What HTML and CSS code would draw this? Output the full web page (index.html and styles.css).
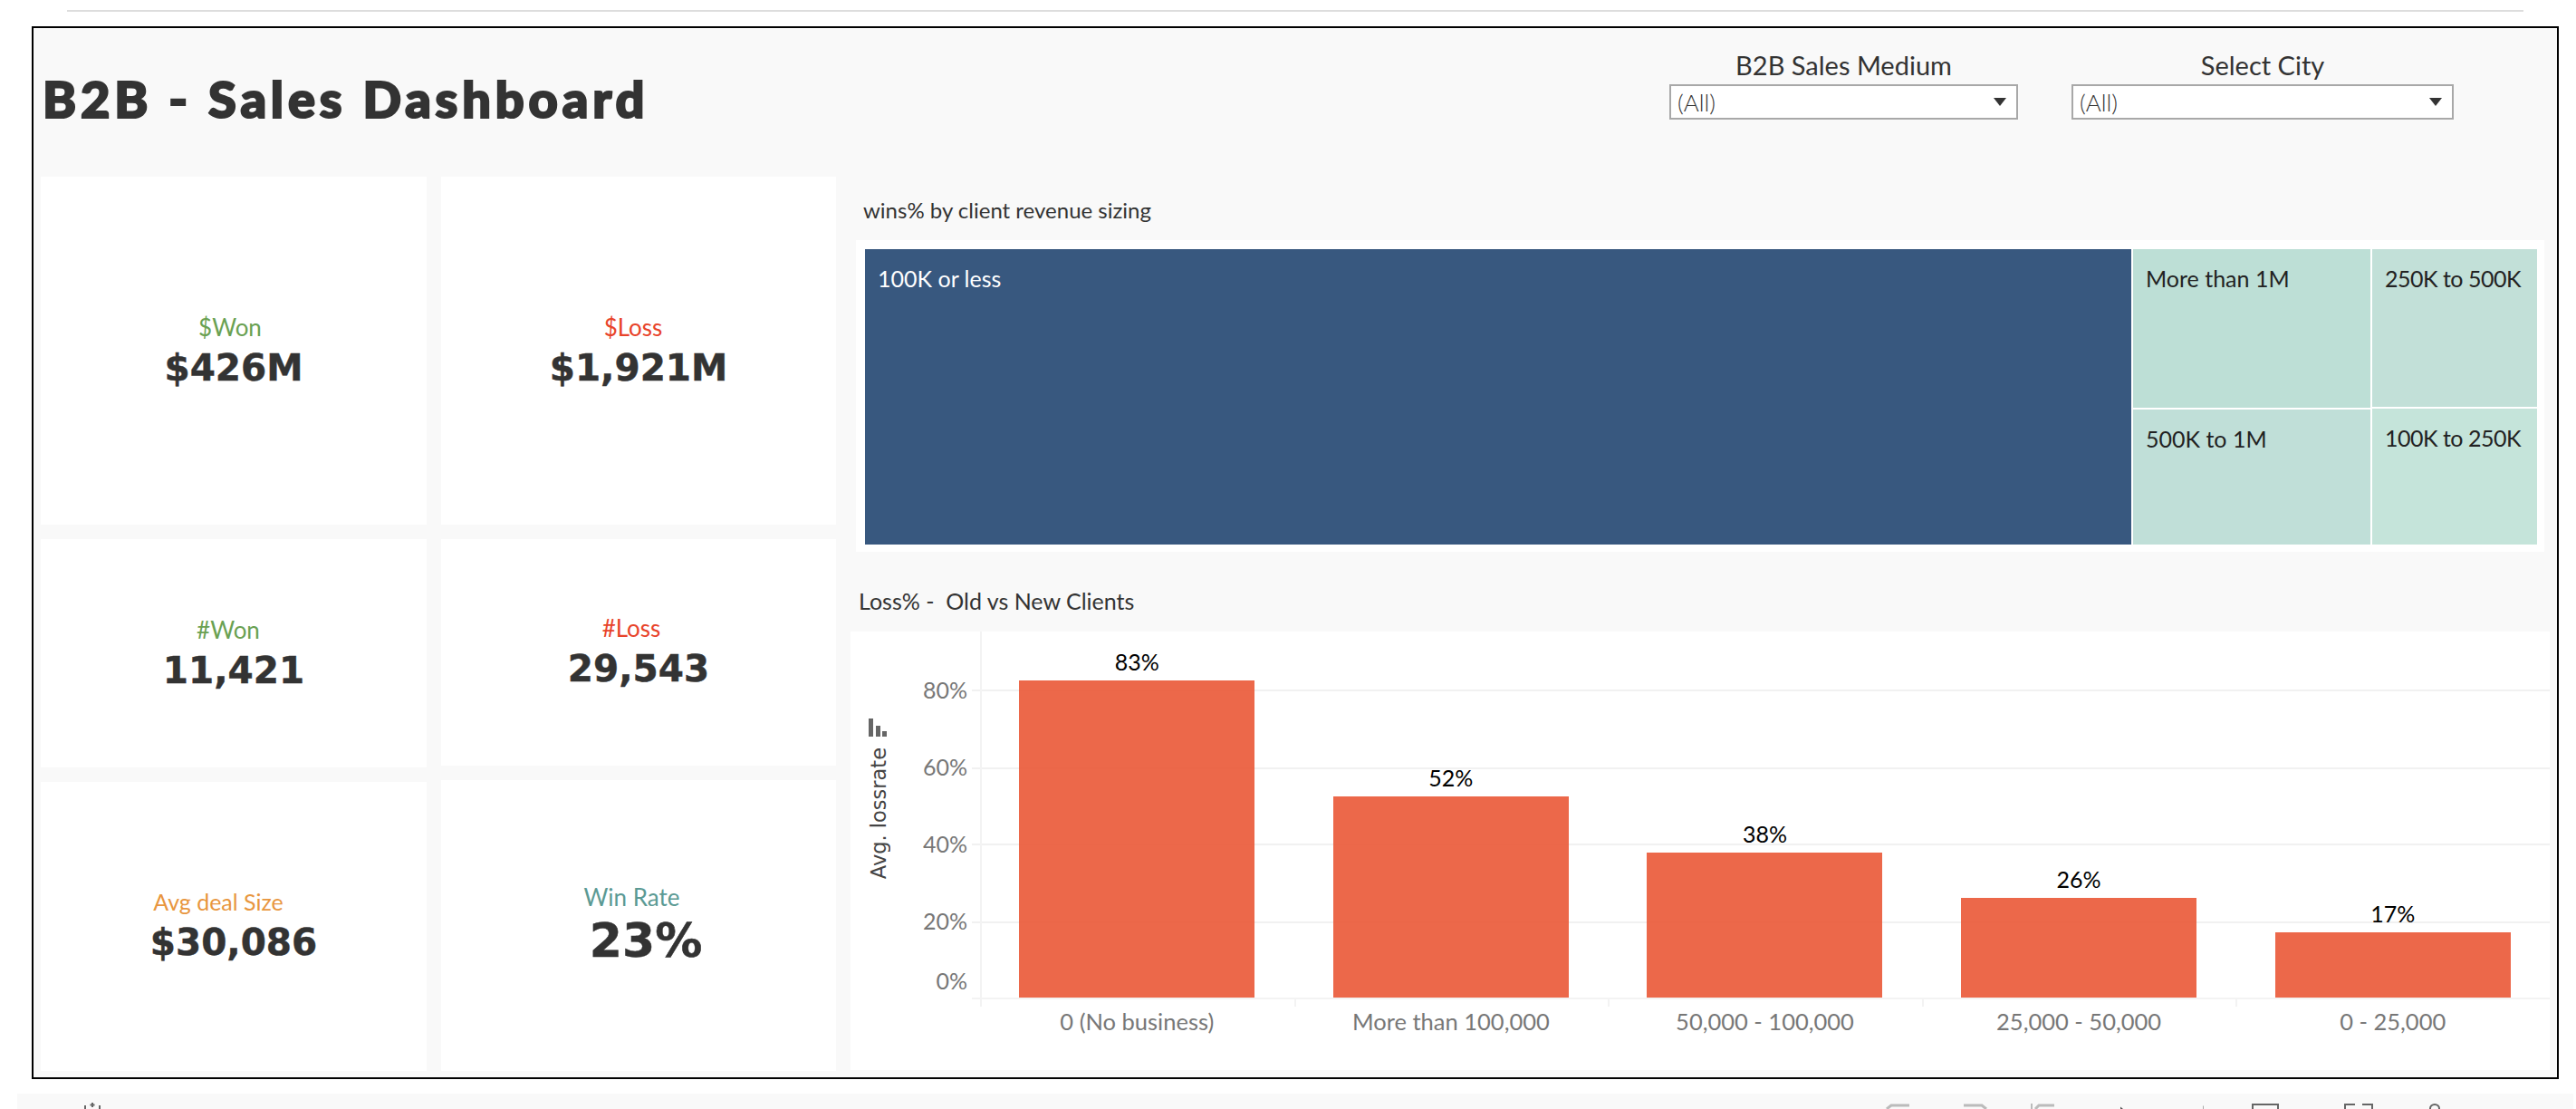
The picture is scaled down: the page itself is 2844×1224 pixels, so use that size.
FILE: index.html
```html
<!DOCTYPE html>
<html lang="en">
<head>
<meta charset="utf-8">
<title>B2B - Sales Dashboard</title>
<link rel="stylesheet" href="styles.css">
</head>
<body>
<div class="topline"></div>
<main class="frame">
  <header class="head">
    <h1 class="title">B2B - Sales Dashboard</h1>
    <div class="filters">
      <div class="filter filter-a">
        <div class="filter-label">B2B Sales Medium</div>
        <div class="select"><span>(All)</span><i class="caret"></i></div>
      </div>
      <div class="filter filter-b">
        <div class="filter-label">Select City</div>
        <div class="select"><span>(All)</span><i class="caret"></i></div>
      </div>
    </div>
  </header>
  <div class="body">
    <section class="kpis">
      <div class="kpi-col">
        <div class="kpi r1"><div class="kpi-label won s-won">$Won</div><div class="kpi-value">$426M</div></div>
        <div class="kpi r2a"><div class="kpi-label won n-won">#Won</div><div class="kpi-value">11,421</div></div>
        <div class="kpi r3a"><div class="kpi-label avg">Avg deal Size</div><div class="kpi-value">$30,086</div></div>
      </div>
      <div class="kpi-col">
        <div class="kpi r1"><div class="kpi-label loss s-loss">$Loss</div><div class="kpi-value">$1,921M</div></div>
        <div class="kpi r2b"><div class="kpi-label loss n-loss">#Loss</div><div class="kpi-value">29,543</div></div>
        <div class="kpi r3b"><div class="kpi-label rate">Win Rate</div><div class="kpi-value big">23%</div></div>
      </div>
    </section>
    <section class="charts">
      <h2 class="tree-title">wins% by client revenue sizing</h2>
      <div class="tree-panel">
        <div class="treemap">
          <div class="cell main">100K or less</div>
          <div class="tree-col col2">
            <div class="cell c1 h1a">More than 1M</div>
            <div class="cell c2 h1b">500K to 1M</div>
          </div>
          <div class="tree-col col3">
            <div class="cell c3 h2a">250K to 500K</div>
            <div class="cell c4 h2b">100K to 250K</div>
          </div>
        </div>
      </div>
      <h2 class="bar-title">Loss% -&nbsp; Old vs New Clients</h2>
      <div class="bar-panel">
        <div class="y-title">
          <svg class="sort" width="20" height="20" viewBox="0 0 20 20"><rect x="0" y="0" width="5" height="20"/><rect x="8" y="8" width="5" height="12"/><rect x="15" y="14" width="5" height="6"/></svg>
          <span class="y-text">Avg. lossrate</span>
        </div>
        <div class="y-axis">
          <span class="yt" style="top:50px">80%</span>
          <span class="yt" style="top:135px">60%</span>
          <span class="yt" style="top:220px">40%</span>
          <span class="yt" style="top:305px">20%</span>
          <span class="yt" style="top:371px">0%</span>
        </div>
        <div class="plot">
          <div class="grid-line" style="top:64px"></div>
          <div class="grid-line" style="top:150px"></div>
          <div class="grid-line" style="top:234px"></div>
          <div class="grid-line" style="top:320px"></div>
          <div class="bars">
            <div class="bar-col"><div class="bar-val">83%</div><div class="bar" style="height:350px"></div></div>
            <div class="bar-col"><div class="bar-val">52%</div><div class="bar" style="height:222px"></div></div>
            <div class="bar-col"><div class="bar-val">38%</div><div class="bar" style="height:160px"></div></div>
            <div class="bar-col"><div class="bar-val">26%</div><div class="bar" style="height:110px"></div></div>
            <div class="bar-col"><div class="bar-val">17%</div><div class="bar" style="height:72px"></div></div>
          </div>
          <div class="x-axis">
            <div class="x-cell">0 (No business)</div>
            <div class="x-cell">More than 100,000</div>
            <div class="x-cell">50,000 - 100,000</div>
            <div class="x-cell">25,000 - 50,000</div>
            <div class="x-cell">0 - 25,000</div>
          </div>
        </div>
      </div>
    </section>
  </div>
</main>
<footer class="toolbar">
  <svg class="tool-edit" width="18" height="8" viewBox="0 0 18 8"><path d="M9 1v5M6.500 3.500h5M1 4v4M17 4v4" stroke="#666" stroke-width="2" fill="none"/></svg>
  <svg class="tool undo" width="26" height="8" viewBox="0 0 26 8"><path d="M1 8l5-4h20" stroke="#bbb" stroke-width="3" fill="none"/></svg>
  <svg class="tool redo" width="26" height="8" viewBox="0 0 26 8"><path d="M25 8l-5-4H0" stroke="#bbb" stroke-width="3" fill="none"/></svg>
  <svg class="tool revert" width="26" height="8" viewBox="0 0 26 8"><path d="M1 2v6" stroke="#bbb" stroke-width="2" fill="none"/><path d="M5 8l4-4h17" stroke="#bbb" stroke-width="3" fill="none"/></svg>
  <svg class="tool refresh" width="92" height="8" viewBox="0 0 92 8"><path d="M0 5.500v2.500h3z" fill="#555"/><path d="M92 4.500v3.500" stroke="#aaa" stroke-width="2" fill="none"/></svg>
  <svg class="tool device" width="30" height="8" viewBox="0 0 30 8"><path d="M1 8V3h28v5" stroke="#666" stroke-width="2" fill="none"/></svg>
  <svg class="tool full" width="32" height="8" viewBox="0 0 32 8"><path d="M1 8V3h11M20 3h11v5" stroke="#666" stroke-width="2" fill="none"/></svg>
  <svg class="tool pin" width="14" height="8" viewBox="0 0 14 8"><path d="M2 8V7.500a5 4.500 0 0 1 10 0V8" stroke="#666" stroke-width="2" fill="none"/></svg>
</footer>
</body>
</html>
```
FILE: styles.css
```css
* { box-sizing: border-box; }
html, body { margin: 0; padding: 0; height: 1224px; overflow: hidden; background: #fff; }
body { font-family: "Lato", sans-serif; color: #333; position: relative; }

.topline { height: 2px; margin: 11px 58px 0 74px; background: #dddddd; }

.frame {
  width: 2790px; height: 1162px; margin: 16px 0 0 35px;
  border: 2px solid #000; background: #f9f9f9;
  display: flex; flex-direction: column; overflow: hidden;
}

.head { height: 164px; position: relative; display: flex; flex: none; }
.title {
  margin: 48px 0 0 10px; font-family: "Lato", sans-serif; font-weight: 900;
  font-size: 56px; line-height: 60px; color: #333; letter-spacing: 4.800px;
  -webkit-text-stroke: 2.200px #333;
}
.filters { display: flex; margin-left: auto; padding-top: 24px; margin-right: 114px; gap: 59px; }
.filter-a { width: 385px; }
.filter-b { width: 422px; }
.filter-label { font-size: 29px; line-height: 34px; text-align: center; color: #333; }
.select {
  height: 39px; margin-top: 4px; border: 2px solid #a8a8a8; background: #fff;
  display: flex; align-items: center; justify-content: space-between;
  padding: 0 11px 0 7px; font-size: 26px; font-weight: 300; color: #333;
}
.caret { width: 0; height: 0; border-left: 7px solid transparent; border-right: 7px solid transparent; border-top: 9px solid #333; }

.body { flex: 1; display: flex; min-height: 0; }
.kpis { width: 886px; flex: none; display: flex; padding-left: 8px; gap: 16px; }
.kpi-col { display: flex; flex-direction: column; gap: 16px; }
.kpi-col:first-child { width: 426px; }
.kpi-col:last-child { width: 436px; }
.kpi { background: #fff; display: flex; flex-direction: column; align-items: center; flex: none; }
.r1 { height: 384px; padding-top: 151px; }
.r2a { height: 252px; padding-top: 85px; }
.r2b { height: 250px; padding-top: 83px; }
.r3a { height: 319px; padding-top: 117px; }
.r3b { height: 321px; padding-top: 114px; }
.kpi-label { font-size: 26px; line-height: 30px; }
.kpi-value { font-family: "DejaVu Sans", sans-serif; font-weight: 700; font-size: 40.500px; line-height: 48px; color: #333; margin-top: 6px; -webkit-text-stroke: .5px #333; }
.kpi-value.big { font-size: 52px; line-height: 56px; margin: 5px 0 0 16px; }
.won { color: #6aa152; }
.loss { color: #e8432a; }
.s-won { margin-left: -8px; }
.n-won { margin-left: -12px; }
.s-loss { margin-left: -12px; }
.n-loss { margin-left: -16px; }
.avg { color: #e8963e; margin-left: -34px; font-size: 25px; }
.rate { color: #5b9a94; margin-left: -15px; }

.charts { flex: 1; min-width: 0; padding-left: 12px; display: flex; flex-direction: column; }
.tree-title { margin: 22px 0 0 18px; font-size: 24px; line-height: 30px; font-weight: 400; color: #333; height: 48px; }
.tree-panel { margin: 0 14px 0 10px; height: 344px; background: #fff; padding: 10px 8px 10px 10px; }
.treemap { display: flex; height: 326px; gap: 2px; }
.cell { padding: 17px 14px; font-size: 25px; line-height: 30px; color: #222; white-space: nowrap; }
.main { width: 1398px; flex: none; background: #38587f; color: #fff; }
.tree-col { display: flex; flex-direction: column; gap: 2px; flex: none; }
.col2 { width: 262px; }
.col3 { width: 182px; letter-spacing: -.5px; }
.h1a { height: 175px; } .h1b { height: 149px; }
.h2a { height: 174px; } .h2b { height: 150px; }
.c1 { background: #bddfd6; }
.c2 { background: #c0dfd8; }
.c3 { background: #c2e0d8; }
.c4 { background: #c5e4da; }

.bar-title { margin: 39px 0 0 13px; height: 49px; font-size: 25px; line-height: 30px; font-weight: 400; color: #333; }
.bar-panel { margin: 0 8px 0 4px; height: 484px; background: #fff; display: flex; position: relative; }
.y-title { width: 60px; flex: none; display: flex; flex-direction: column; align-items: flex-start; padding: 96px 0 0 20px; }
.sort { fill: #666; display: block; }
.y-text { writing-mode: vertical-rl; transform: rotate(180deg); font-family: "DejaVu Sans", sans-serif; font-size: 22.500px; line-height: 22px; color: #444; margin-top: 12px; white-space: nowrap; }
.y-axis { width: 83px; flex: none; position: relative; }
.yt { position: absolute; right: 14px; font-size: 25px; line-height: 28px; color: #777; font-weight: 400; }
.plot { flex: 1; position: relative; display: flex; flex-direction: column; }
.grid-line { position: absolute; left: -9px; right: 0; height: 2px; background: #f1f1f1; }
.bars { display: grid; grid-template-columns: repeat(5, 1fr); height: 404px; position: relative; }
.bars::before { content: ""; position: absolute; left: 0; top: 0; bottom: 0; width: 2px; background: #f3f3f3; }
.bar-col { display: flex; flex-direction: column; align-items: center; justify-content: flex-end; }
.bar-val { font-size: 25px; line-height: 30px; color: #000; margin-bottom: 6px; }
.bar { width: 260px; background: rgba(235, 92, 60, .93); }
.x-axis { display: grid; grid-template-columns: repeat(5, 1fr); border-top: 2px solid #f3f3f3; margin-left: -9px; padding-left: 9px; }
.x-cell { position: relative; text-align: center; font-size: 25.500px; line-height: 30px; color: #777; padding-top: 9px; }
.x-cell::before { content: ""; position: absolute; left: 0; top: 0; width: 2px; height: 8px; background: #f3f3f3; }

.toolbar { position: absolute; left: 19px; right: 3px; top: 1207px; height: 17px; background: #f9f9f9; overflow: hidden; }
.tool-edit { position: absolute; left: 74px; top: 9px; }
.tool { position: absolute; top: 9px; }
.undo { left: 2063px; } .redo { left: 2149px; } .revert { left: 2223px; }
.refresh { left: 2322px; } .device { left: 2467px; } .full { left: 2569px; } .pin { left: 2662px; }
```
